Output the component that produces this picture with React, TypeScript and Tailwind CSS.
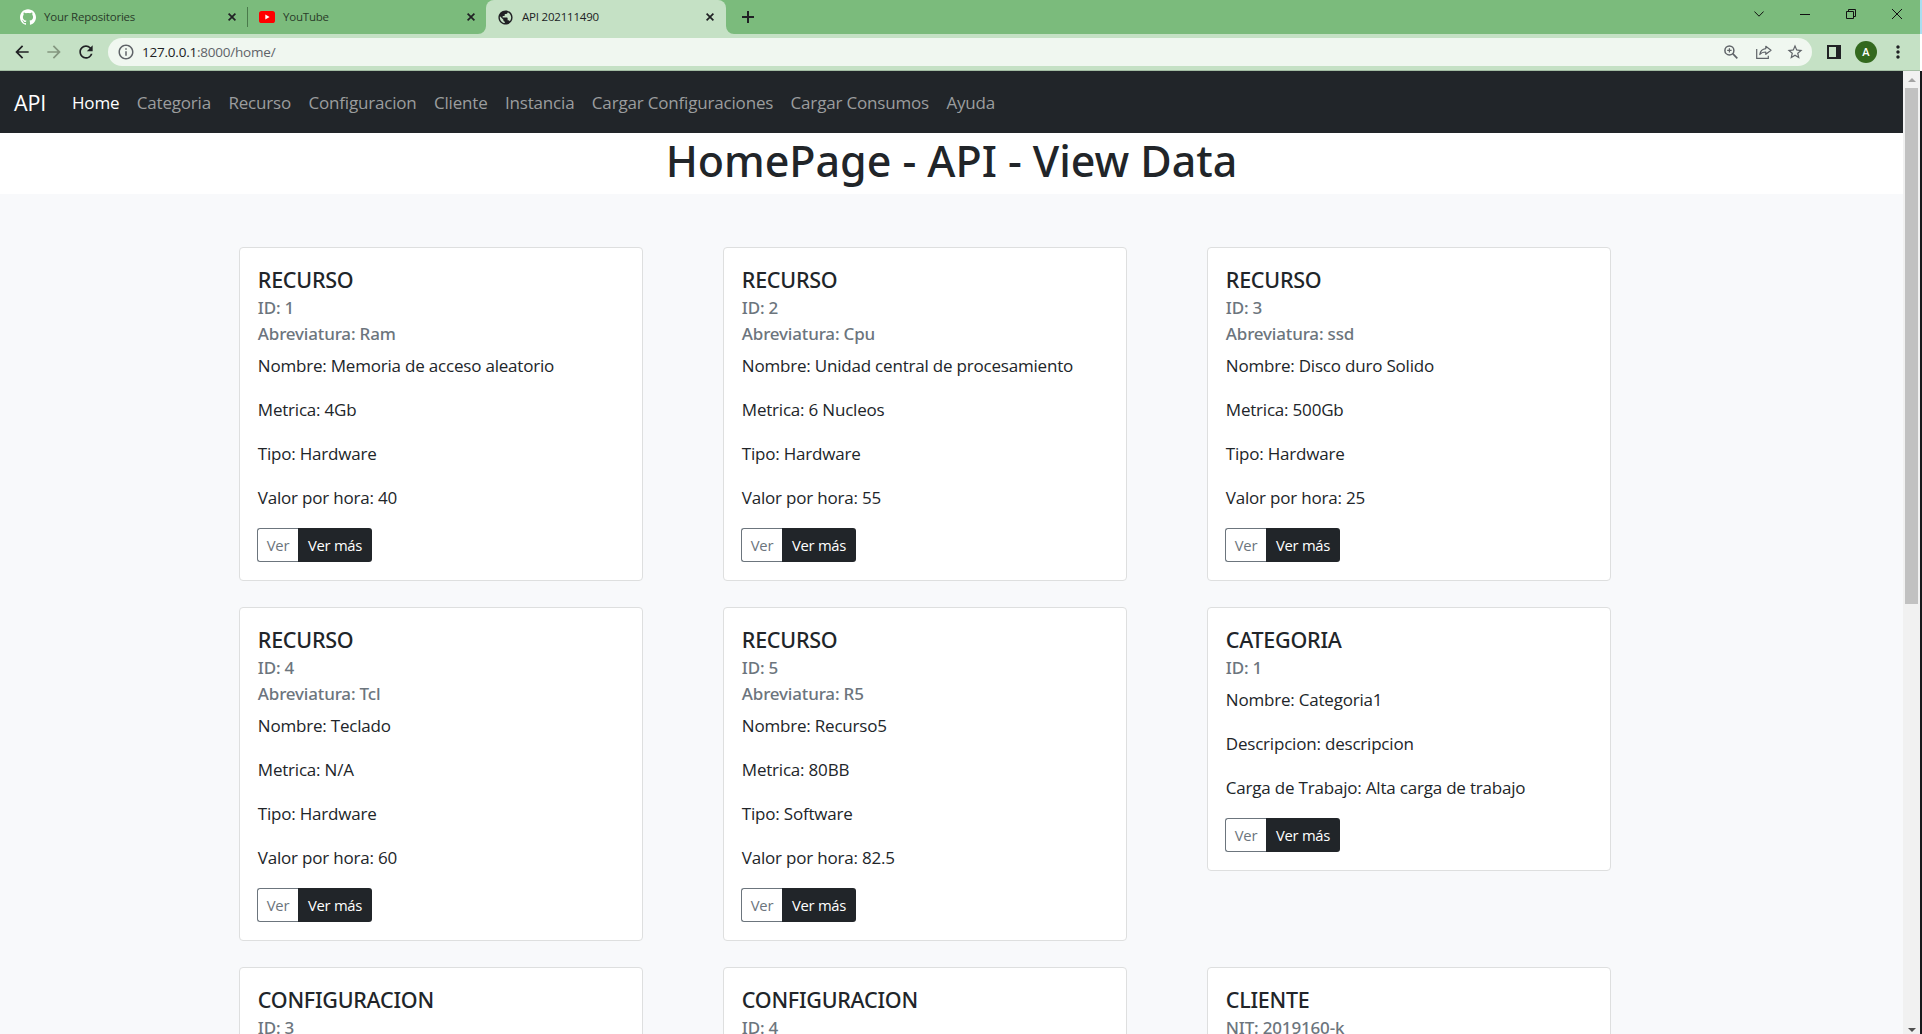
import React from 'react';
import {
  MdArrowBack,
  MdArrowForward,
  MdInfoOutline,
  MdMoreVert,
  MdPublic,
  MdRefresh,
  MdStarBorder,
} from 'react-icons/md';
import { SiGithub } from 'react-icons/si';

type CardData = {
  title: string;
  subtitles: string[];
  lines: string[];
};

const recurso = (id: number, abrev: string, nombre: string, metrica: string, tipo: string, valor: string): CardData => ({
  title: 'RECURSO',
  subtitles: [`ID: ${id}`, `Abreviatura: ${abrev}`],
  lines: [`Nombre: ${nombre}`, `Metrica: ${metrica}`, `Tipo: ${tipo}`, `Valor por hora: ${valor}`],
});

const cards: CardData[] = [
  recurso(1, 'Ram', 'Memoria de acceso aleatorio', '4Gb', 'Hardware', '40'),
  recurso(2, 'Cpu', 'Unidad central de procesamiento', '6 Nucleos', 'Hardware', '55'),
  recurso(3, 'ssd', 'Disco duro Solido', '500Gb', 'Hardware', '25'),
  recurso(4, 'Tcl', 'Teclado', 'N/A', 'Hardware', '60'),
  recurso(5, 'R5', 'Recurso5', '80BB', 'Software', '82.5'),
  {
    title: 'CATEGORIA',
    subtitles: ['ID: 1'],
    lines: ['Nombre: Categoria1', 'Descripcion: descripcion', 'Carga de Trabajo: Alta carga de trabajo'],
  },
  { title: 'CONFIGURACION', subtitles: ['ID: 3'], lines: [] },
  { title: 'CONFIGURACION', subtitles: ['ID: 4'], lines: [] },
  { title: 'CLIENTE', subtitles: ['NIT: 2019160-k'], lines: [] },
];

const navLinks = [
  'Home',
  'Categoria',
  'Recurso',
  'Configuracion',
  'Cliente',
  'Instancia',
  'Cargar Configuraciones',
  'Cargar Consumos',
  'Ayuda',
];

function Cross() {
  return (
    <svg className="size-2" viewBox="0 0 8 8" fill="none" stroke="#202124" strokeWidth="1.7">
      <path d="M.6.6l6.8 6.8M7.4.6L.6 7.4" />
    </svg>
  );
}

function YouTubeIcon() {
  return (
    <svg className="h-3 w-4" viewBox="0 0 16 12">
      <rect width="16" height="12" rx="2.6" fill="#f00" />
      <path d="M6.3 3.6v4.8L10.6 6z" fill="#fff" />
    </svg>
  );
}

function TabStrip() {
  return (
    <div className="flex h-[34px] text-[11.5px] tracking-[-0.2px] text-[#202124]">
      <div className="flex w-[247px] items-center pr-[11px] pl-5">
        <SiGithub className="size-4 text-white" />
        <span className="ml-2 flex-1 text-[#2a3b2a]">Your Repositories</span>
        <Cross />
      </div>
      <div className="mt-[7px] h-5 w-px bg-[#4a7a4b]" />
      <div className="flex w-[238px] items-center pr-[11px] pl-[11px]">
        <YouTubeIcon />
        <span className="ml-2 flex-1 text-[#2a3b2a]">YouTube</span>
        <Cross />
      </div>
      <div className="relative flex w-[240px] items-center rounded-t-lg bg-[#c5e1c5] pr-3 pl-[11px]">
        <svg className="absolute bottom-0 -left-2 size-2" viewBox="0 0 8 8" fill="#c5e1c5">
          <path d="M8 0v8H0a8 8 0 0 0 8-8z" />
        </svg>
        <svg className="absolute -right-2 bottom-0 size-2" viewBox="0 0 8 8" fill="#c5e1c5">
          <path d="M0 0v8h8a8 8 0 0 1-8-8z" />
        </svg>
        <MdPublic className="size-[17px]" />
        <span className="ml-2 flex-1">API 202111490</span>
        <Cross />
      </div>
      <div className="flex flex-1 items-center pl-4">
        <svg className="size-3" viewBox="0 0 12 12" stroke="#202124" strokeWidth="2">
          <path d="M6 0v12M0 6h12" />
        </svg>
      </div>
      <div className="flex h-7 items-center text-[#111]">
        <div className="flex w-[46px] justify-center">
          <svg className="h-[6px] w-[10px]" viewBox="0 0 10 6" fill="none" stroke="currentColor">
            <path d="M.4.5L5 5.2 9.6.5" />
          </svg>
        </div>
        <div className="flex w-[46px] justify-center">
          <div className="h-px w-[10px] bg-[#111]" />
        </div>
        <div className="flex w-[46px] justify-center">
          <svg className="size-[10px]" viewBox="0 0 10 10" fill="none" stroke="currentColor">
            <path d="M.5 2.5h7v7h-7zM2.5 2.5v-2h7v7h-2" />
          </svg>
        </div>
        <div className="flex w-[46px] justify-center">
          <svg className="size-[10px]" viewBox="0 0 10 10" stroke="currentColor">
            <path d="M0 0l10 10M10 0L0 10" />
          </svg>
        </div>
      </div>
    </div>
  );
}

function Toolbar() {
  return (
    <div className="flex h-[37px] items-center border-b border-[#a3bda3] bg-[#c5e1c5] pr-3 pl-3 text-[#202124]">
      <MdArrowBack className="size-5" />
      <MdArrowForward className="ml-3 size-5 text-[#84967f]" />
      <MdRefresh className="ml-3 size-5" />
      <div className="ml-3 flex h-7 flex-1 items-center rounded-full bg-[#f0f7f0] pr-2 pl-[9px] text-[#5f6368]">
        <MdInfoOutline className="size-[18px]" />
        <span className="ml-[7px] flex-1 text-[13.5px] tracking-[-0.22px]">
          <span className="text-[#202124]">127.0.0.1</span>:8000/home/
        </span>
        <svg className="size-[14px]" viewBox="0 0 14 14" fill="none" stroke="currentColor" strokeWidth="1.5">
          <circle cx="5.4" cy="5.4" r="4.5" />
          <path d="M8.700 8.700l4.600 4.600" strokeWidth="1.700" />
          <path d="M5.400 3.200v4.400M3.200 5.400h4.400" strokeWidth="1.200" />
        </svg>
        <svg className="ml-[18px] h-[14px] w-4" viewBox="0 0 16 14" fill="none" stroke="currentColor" strokeWidth="1.2">
          <path d="M.7 4v9.300h11.600v-2.600" />
          <path d="M9.800 1.300l5.200 4-5.200 4V7c-2.800 0-4.600.7-6 2.500.5-3.600 2.500-5.500 6-5.900z" strokeLinejoin="round" />
        </svg>
        <MdStarBorder className="ml-[14px] size-[18px]" />
      </div>
      <div className="ml-[15px] h-[14px] w-[14px] border-2 border-r-[5px] border-[#202124]" />
      <div className="ml-[14px] flex size-[22px] items-center justify-center rounded-full bg-[#33691e] text-[11px] font-semibold text-white">
        A
      </div>
      <MdMoreVert className="ml-[11px] size-5" />
    </div>
  );
}

function Navbar() {
  return (
    <nav className="flex h-[62px] items-center bg-[#212529] pt-[2px] pl-[14px]">
      <span className="w-[58px] text-[21.5px] tracking-[-0.2px] text-white">API</span>
      <div className="flex gap-[17.4px] text-[17px] tracking-[-0.18px] text-[#9b9d9e]">
        {navLinks.map((label) => (
          <a key={label} className="first:text-white">
            {label}
          </a>
        ))}
      </div>
    </nav>
  );
}

function Card({ title, subtitles, lines }: CardData) {
  return (
    <article className="w-[404px] rounded-[4px] border border-[#dedfdf] bg-white px-[17px] pt-[17px] pb-[18px] text-[#212529]">
      <div className="pl-[0.8px]">
        <h5 className="mb-px font-['Noto_Sans',sans-serif] text-[21.5px] leading-[29px] font-medium tracking-[-0.25px]">
          {title}
        </h5>
        <div className="mb-[6px] font-['Noto_Sans',sans-serif] text-[17px] leading-[26px] font-medium tracking-[-0.17px] text-[#6c757d]">
          {subtitles.map((s) => (
            <h6 key={s}>{s}</h6>
          ))}
        </div>
        {lines.map((l) => (
          <p key={l} className="mb-[18px] text-[17px] leading-[26px] tracking-[-0.2px]">
            {l}
          </p>
        ))}
      </div>
      <div className="-mt-px flex h-[34px] text-[14.8px] tracking-[-0.27px]">
        <button className="w-[41px] rounded-l-[3px] border border-r-0 border-[#6c757d] pt-px text-[#6c757d]">Ver</button>
        <button className="w-[74px] rounded-r-[3px] bg-[#212529] pt-px text-white">Ver más</button>
      </div>
    </article>
  );
}

function Scrollbar() {
  return (
    <div className="flex w-[17px] flex-col items-center bg-[#f1f1f1]">
      <div className="flex h-[17px] items-center">
        <div className="border-x-[4px] border-b-[4px] border-x-transparent border-b-[#a3a3a3]" />
      </div>
      <div className="h-[516px] w-[13px] bg-[#c1c1c1]" />
      <div className="mt-auto flex h-[6px] items-start">
        <div className="border-x-[4px] border-t-[4px] border-x-transparent border-t-[#505050]" />
      </div>
    </div>
  );
}

export default function App() {
  return (
    <div className="flex h-[1034px] w-[1922px] overflow-hidden font-['Open_Sans',sans-serif]">
      <div className="flex w-[1920px] flex-col bg-[#7bbb7c]">
        <TabStrip />
        <Toolbar />
        <div className="flex min-h-0 flex-1">
          <main className="flex-1 overflow-hidden bg-[#f8f9fb]">
            <Navbar />
            <h1 className="h-[61px] bg-white text-center font-['Noto_Sans',sans-serif] text-[43px] leading-[56px] font-medium tracking-[-0.05px] text-[#212529]">
              HomePage - API - View Data
            </h1>
            <section className="mt-[53px] ml-[239px] grid grid-cols-[404px_404px_404px] items-start gap-x-20 gap-y-[26px]">
              {cards.map((card, i) => (
                <Card key={i} {...card} />
              ))}
            </section>
          </main>
          <Scrollbar />
        </div>
      </div>
      <div className="flex flex-1 flex-col">
        <div className="h-[34px] bg-[#a9def0]" />
        <div className="h-[37px] bg-white" />
        <div className="flex-1 bg-[#17191c]" />
      </div>
    </div>
  );
}
